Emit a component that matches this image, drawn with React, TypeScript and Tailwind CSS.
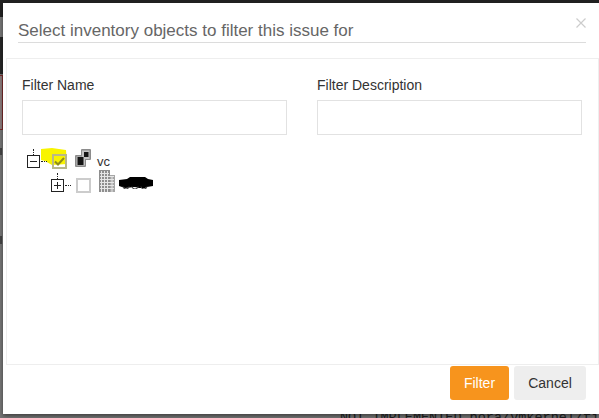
function Dots({ className }: { className: string }) {
  return <div className={className} />;
}

function CheckBox({ checked }: { checked?: boolean }) {
  return (
    <div className={"w-[15px] h-[15px] border-2 flex items-center justify-center " + (checked ? "border-[#b8b88a]" : "border-[#cccccc] bg-white")}>
      {checked && (
        <svg width="11" height="9" viewBox="0 0 11 9" fill="none">
          <path d="M1 4.5 L4 7.5 L10 1" stroke="#8f8c1a" strokeWidth="2" />
        </svg>
      )}
    </div>
  );
}

function ToggleBox({ plus }: { plus?: boolean }) {
  return (
    <div className="relative w-[13px] h-[13px] border border-[#222] bg-white shrink-0">
      <div className="absolute left-[2px] right-[2px] top-[5px] h-px bg-[#222]" />
      {plus && <div className="absolute top-[2px] bottom-[2px] left-[5px] w-px bg-[#222]" />}
      <Dots className="absolute left-[5px] -top-[7px] h-[6px] border-l border-dotted border-[#222]" />
      <Dots className="absolute left-[13px] top-[5px] w-[6px] border-t border-dotted border-[#222]" />
    </div>
  );
}

function VcIcon() {
  return (
    <svg width="16" height="18" viewBox="0 0 16 18" className="block">
      <path d="M6 1a1 1 0 0 1 1-1h8a1 1 0 0 1 1 1v9a1 1 0 0 1-1 1h-4v6a1 1 0 0 1-1 1H1a1 1 0 0 1-1-1V7a1 1 0 0 1 1-1h5z" fill="#8c8c8c" />
      <path d="M7 1.5h7.5V10H10v6.5H1.500V7.500H7z" fill="#c4c4c4" />
      <rect x="2.500" y="8" width="6" height="8" fill="#151515" />
      <rect x="9" y="3" width="4.500" height="5" fill="#151515" />
    </svg>
  );
}

function BuildingIcon() {
  return (
    <svg width="16" height="22" viewBox="0 0 16 22" className="block">
      <rect x="0" y="0" width="11" height="22" fill="#8f8f8f" />
      <rect x="11" y="5" width="5" height="17" fill="#a6a6a6" />
      <path d="M2.500 1v21M5.500 1v21M8.500 1v21M13 6v16M1 3.500h9M1 6.500h14M1 9.500h14M1 12.500h14M1 15.500h14M1 18.500h14" stroke="#e6e6e6" strokeWidth="1" />
    </svg>
  );
}

function Redaction() {
  return (
    <svg width="34" height="12" viewBox="0 0 34 12" className="block">
      <path d="M0 3 L8 2 L11 0 H26 L29 2 L34 3 V9 L28 10 L26 11 H20 L16 10 L6 11 L0 9Z" fill="#000" />
      <path d="M4 9.500a3 2.500 0 0 0 6 0M13 9.500a3 2.500 0 0 0 6 0M22 9.500a3 2.500 0 0 0 6 0" stroke="#444" fill="none" />
    </svg>
  );
}

export default function App() {
  return (
    <div className="relative w-[599px] h-[418px] overflow-hidden bg-[#757575] font-['Liberation_Sans',Arial,sans-serif]">
      {/* what shows behind the dialog */}
      <div className="absolute left-0 top-0 w-full h-[3px] bg-[#222]" />
      <div className="absolute left-0 top-0 w-[3px] h-[17px] bg-[#222]" />
      <div className="absolute left-0 top-[37px] w-[3px] h-[37px] bg-[#262626]" />
      <div className="absolute left-0 top-[75px] w-[3px] h-[55px] bg-[#8a7a7a] border-r border-y border-[#7a2a2a]" />
      <div className="absolute left-0 top-[148px] w-[2px] h-[7px] bg-[#444]" />
      <div className="absolute left-0 top-[236px] w-[2px] h-[8px] bg-[#444]" />
      <div className="absolute left-[340px] top-[411px] font-['Liberation_Mono',monospace] text-[13.5px] leading-[14px] text-[#222] whitespace-nowrap">
        NOT IMPLEMENTED bora/vmkernel/fi
      </div>

      <div className="absolute left-[3px] top-[3px] w-[596px] h-[411px] bg-white flex flex-col shadow-[0_2px_4px_rgba(0,0,0,0.45)]">
        <div className="relative h-[55px] shrink-0 px-[15px] pt-[16px]">
          <div className="h-[24px] border-b border-[#dcdcdc] text-[17px] leading-[23px] text-[#666] w-[568px]">
            Select inventory objects to filter this issue for
          </div>
          <div className="absolute right-[13px] top-[15px] text-[#cccccc]">
            <svg width="10" height="10" viewBox="0 0 10 10" stroke="currentColor" strokeWidth="1.2" className="block">
              <path d="M0.500 0.500l9 9M9.500 0.500l-9 9" />
            </svg>
          </div>
        </div>

        <div className="h-[307px] shrink-0 ml-[3px] border border-[#eeeeee] px-[15px] pt-[18px]">
          <div className="grid grid-cols-[265px_265px] gap-x-[30px]">
            <div>
              <div className="text-sm leading-[17px] text-[#333]">Filter Name</div>
              <div className="mt-[6px] h-[35px] border border-[#e2e2e2] bg-white" />
            </div>
            <div>
              <div className="text-sm leading-[17px] text-[#333]">Filter Description</div>
              <div className="mt-[6px] h-[35px] border border-[#e2e2e2] bg-white" />
            </div>
          </div>

          <div className="mt-[14px] ml-[5px] flex flex-col gap-[1px]">
            <div className="relative flex items-start h-[20px]">
              <svg width="27" height="18" viewBox="0 0 27 18" className="absolute left-[13px] -top-[1px]">
                <path d="M1 1 L12 0 L26 2 L27 16 L12 17 L5 13 L1 12Z" fill="#f8f400" />
              </svg>
              <div className="relative mt-[6px]"><ToggleBox /></div>
              <div className="relative ml-[12px] mt-[5px]"><CheckBox checked /></div>
              <div className="relative ml-[8px]"><VcIcon /></div>
              <span className="ml-[6px] mt-[5px] text-[13px] leading-[15px] text-[#333]">vc</span>
            </div>
            <div className="flex items-start h-[23px] pl-[24px]">
              <div className="mt-[9px]"><ToggleBox plus /></div>
              <div className="ml-[12px] mt-[8px]"><CheckBox /></div>
              <div className="ml-[8px]"><BuildingIcon /></div>
              <div className="ml-[4px] mt-[7px]"><Redaction /></div>
            </div>
          </div>
        </div>

        <div className="flex justify-end gap-[5px] pt-[1px] pr-[13px]">
          <div className="w-[59px] h-[34px] rounded-[3px] bg-[#f7941d] text-white text-sm flex items-center justify-center">Filter</div>
          <div className="w-[72px] h-[34px] rounded-[3px] bg-[#eeeeee] text-[#333] text-sm flex items-center justify-center">Cancel</div>
        </div>
      </div>
    </div>
  );
}
